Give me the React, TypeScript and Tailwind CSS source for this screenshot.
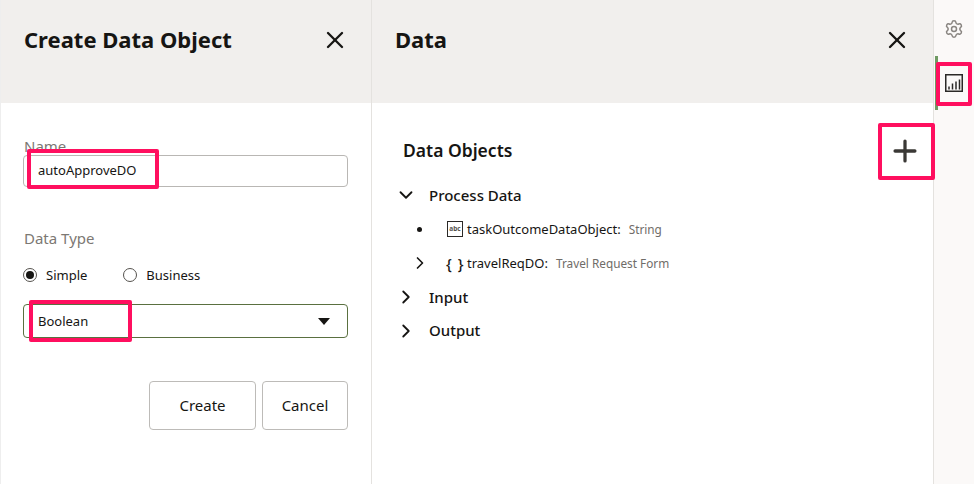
import { X, Plus, ChevronDown, ChevronRight, Settings } from "lucide-react";

const font = "font-['Noto_Sans',sans-serif]";

// pink annotation boxes drawn on top of the screenshot
const Callout = ({ className }: { className: string }) => (
  <div className={`absolute border-[4px] border-[#ff0f5f] rounded-[2px] pointer-events-none ${className}`} />
);

const DataIcon = () => (
  <span className="w-[16px] h-[16px] shrink-0 border-[1.5px] border-[#2b2927] flex items-center justify-center text-[6.5px] leading-none font-bold text-[#55524e]">
    abc
  </span>
);

const ReportIcon = () => (
  <svg width="18" height="18" viewBox="0 0 18 18" fill="none" stroke="#2b2927">
    <rect x="0.75" y="0.75" width="16.5" height="16.5" strokeWidth="1.5" />
    <path d="M4 15.5v-3M7.5 15.5v-6M11 15.5v-8M14.5 15.5v-10" strokeWidth="1.5" />
  </svg>
);

export default function App() {
  return (
    <div className={`relative flex w-[974px] h-[484px] overflow-hidden bg-white text-[#161513] ${font}`}>
      {/* Create panel */}
      <section className="w-[372px] shrink-0 border-l border-l-[#eeeeee] border-r border-r-[#e4e2df] flex flex-col">
        <header className="h-[103px] bg-[#f1efed] pl-[23px] pr-[22px] pt-[24px] flex justify-between items-start">
          <h2 className="text-[22px] leading-[30px] font-bold">Create Data Object</h2>
          <X className="w-[28px] h-[28px] mt-[2px]" strokeWidth={2} />
        </header>
        <div className="pl-[22px] pr-[23px] pt-[34px]">
          <label className="block ml-px text-[15px] leading-[19px] text-[#7c7873]">Name</label>
          <div className="mt-[-1px] h-[32px] border border-[#b9b7b4] rounded-[4px] flex items-center pl-[14px] text-[13px]">
            autoApproveDO
          </div>
          <div className="mt-[42px] ml-px text-[15px] leading-[19px] text-[#7c7873]">Data Type</div>
          <div className="mt-[18px] flex items-center text-[13px] leading-[18px]">
            <span className="w-[14px] h-[14px] rounded-full border border-[#55524e] flex items-center justify-center">
              <span className="w-[8px] h-[8px] rounded-full bg-[#161513]" />
            </span>
            <span className="ml-[9px]">Simple</span>
            <span className="ml-[36px] w-[14px] h-[14px] rounded-full border border-[#55524e]" />
            <span className="ml-[9px]">Business</span>
          </div>
          <div className="mt-[20px] h-[34px] border border-[#5a7040] rounded-[4px] flex items-center justify-between pl-[14px] pr-[17px] text-[13px]">
            <span className="pt-px">Boolean</span>
            <span className="w-0 h-0 border-x-[6.5px] border-x-transparent border-t-[7px] border-t-[#161513]" />
          </div>
          <div className="mt-[43px] flex justify-end gap-[6px]">
            <button className="w-[107px] h-[49px] border border-[#bdbbb8] rounded-[4px] text-[15px]">Create</button>
            <button className="w-[86px] h-[49px] border border-[#bdbbb8] rounded-[4px] text-[15px]">Cancel</button>
          </div>
        </div>
      </section>

      {/* Data panel */}
      <section className="flex-1 flex flex-col">
        <header className="h-[103px] bg-[#f1efed] pl-[23px] pr-[22px] pt-[24px] flex justify-between items-start">
          <h2 className="text-[22px] leading-[30px] font-bold">Data</h2>
          <X className="w-[28px] h-[28px] mt-[2px]" strokeWidth={2} />
        </header>
        <div className="pl-[31px] pr-[11px] pt-[34px]">
          <div className="flex justify-between items-center h-[28px]">
            <h3 className="text-[17.5px] font-semibold leading-[26px] mb-[2px]">Data Objects</h3>
            <Plus className="w-[34px] h-[34px] -my-[3px] text-[#3a3835]" strokeWidth={2.3} />
          </div>
          <ul className="mt-[13px] text-[15px] font-medium">
            <li className="h-[34px] flex items-center gap-[12px] -ml-[8px]">
              <ChevronDown className="w-[22px] h-[22px]" strokeWidth={2} />
              Process Data
            </li>
            <li className="h-[34px] flex items-center font-normal text-[13px]">
              <span className="w-[5px] h-[5px] ml-[14px] rounded-full bg-[#161513]" />
              <span className="ml-[25px]"><DataIcon /></span>
              <span className="ml-[4px] pt-px">taskOutcomeDataObject:</span>
              <span className="ml-2 pt-px text-[11.8px] text-[#6f6c68]">String</span>
            </li>
            <li className="h-[34px] flex items-center font-normal text-[13px]">
              <ChevronRight className="w-[20px] h-[20px] ml-[7px]" strokeWidth={2} />
              <span className="ml-[16px] w-[20px] text-[15px] font-medium tracking-[1px]">{"{ }"}</span>
              <span className="ml-[1px] pt-px">travelReqDO:</span>
              <span className="ml-2 pt-px text-[11.8px] text-[#6f6c68]">Travel Request Form</span>
            </li>
            <li className="h-[34px] flex items-center gap-[12px] -ml-[8px]">
              <ChevronRight className="w-[22px] h-[22px]" strokeWidth={2} />
              Input
            </li>
            <li className="h-[33px] flex items-center gap-[12px] -ml-[8px]">
              <ChevronRight className="w-[22px] h-[22px]" strokeWidth={2} />
              Output
            </li>
          </ul>
        </div>
      </section>

      {/* Right rail */}
      <aside className="w-[41px] shrink-0 bg-[#fbf9f8] border-l border-[#e4e2df] flex flex-col items-center pt-[19px]">
        <Settings className="w-[20px] h-[20px] text-[#8a8682]" strokeWidth={1.8} />
        <div className="mt-[35px]"><ReportIcon /></div>
      </aside>
      <div className="absolute left-[935px] top-[56px] w-[3px] h-[54px] bg-[#6f9a63]" />

      <Callout className="left-[27px] top-[149px] w-[132px] h-[40px]" />
      <Callout className="left-[29px] top-[300px] w-[103px] h-[42px]" />
      <Callout className="left-[878px] top-[123px] w-[57px] h-[57px]" />
      <Callout className="left-[936px] top-[62px] w-[36px] h-[44px]" />
    </div>
  );
}
